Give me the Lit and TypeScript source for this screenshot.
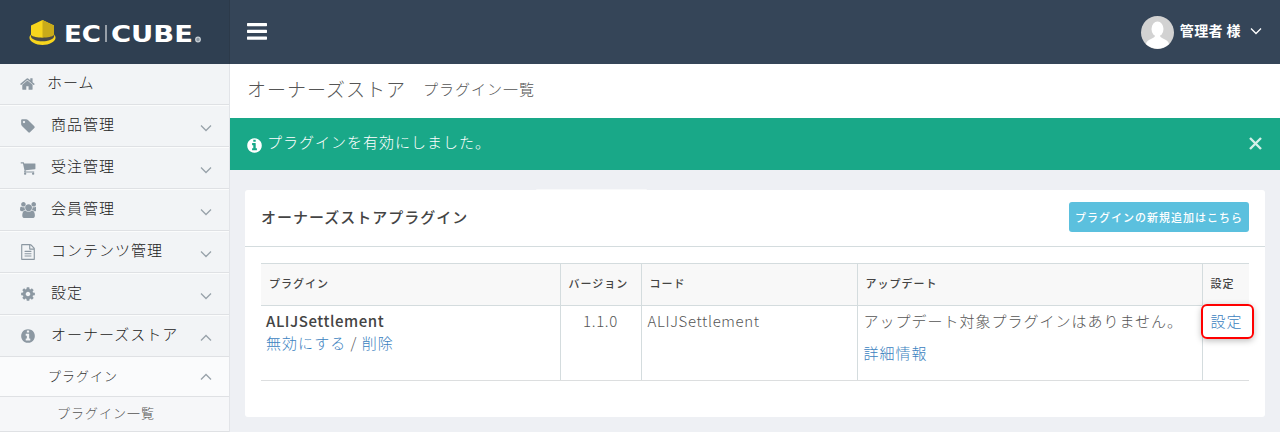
import { LitElement, html, css, svg } from "lit";
import { customElement } from "lit/decorators.js";

const P: Record<string, string> = {
  home: "M1408 992v480q0 26-19 45t-45 19h-384v-384h-256v384h-384q-26 0-45-19t-19-45v-480q0-1 .5-3t.5-3l575-474 575 474q1 2 1 6zm223-69l-62 74q-8 9-21 11h-3q-13 0-21-7l-692-577-692 577q-12 8-24 7-13-2-21-11l-62-74q-8-10-7-23.500t11-21.500l719-599q32-26 76-26t76 26l244 204v-195q0-14 9-23t23-9h192q14 0 23 9t9 23v408l219 182q10 8 11 21.500t-7 23.500z",
  tag: "M576 448q0-53-37.500-90.500t-90.500-37.500-90.500 37.500-37.500 90.500 37.500 90.500 90.500 37.500 90.500-37.500 37.500-90.500zm1067 576q0 53-37 90l-491 492q-39 37-91 37-53 0-90-37l-715-716q-38-37-64.500-101t-26.500-117v-416q0-52 38-90t90-38h416q53 0 117 26.500t102 64.500l715 714q37 39 37 91z",
  cart: "M704 1536q0 52-38 90t-90 38-90-38-38-90 38-90 90-38 90 38 38 90zm896 0q0 52-38 90t-90 38-90-38-38-90 38-90 90-38 90 38 38 90zm128-1088v512q0 24-16.500 42.500t-40.500 21.500l-1044 122q13 60 13 70 0 16-24 64h920q26 0 45 19t19 45-19 45-45 19h-1024q-26 0-45-19t-19-45q0-11 8-31.500t16-36 21.500-40 15.500-29.500l-177-823h-204q-26 0-45-19t-19-45 19-45 45-19h256q16 0 28.500 6.500t19.500 15.500 13 24.500 8 26 5.500 29.500 4.500 26h1201q26 0 45 19t19 45z",
  users: "M593 896q-162 5-265 128h-134q-82 0-138-40.500t-56-118.500q0-353 124-353 6 0 43.500 21t97.500 42.500 119 21.500q67 0 133-23-5 37-5 66 0 139 81 256zm1071 637q0 120-73 189.500t-194 69.500h-874q-121 0-194-69.500t-73-189.500q0-53 3.500-103.500t14-109 26.500-108.500 43-97.500 62-81 85.500-53.500 111.500-20q10 0 43 21.500t73 48 107 48 135 21.500 135-21.500 107-48 73-48 43-21.500q61 0 111.500 20t85.500 53.500 62 81 43 97.500 26.500 108.500 14 109 3.500 103.500zm-1024-1277q0 106-75 181t-181 75-181-75-75-181 75-181 181-75 181 75 75 181zm704 384q0 159-112.500 271.500t-271.500 112.500-271.500-112.500-112.500-271.500 112.500-271.500 271.500-112.500 271.500 112.500 112.500 271.500zm576 225q0 78-56 118.500t-138 40.500h-134q-103-123-265-128 81-117 81-256 0-29-5-66 66 23 133 23 59 0 119-21.500t97.500-42.500 43.500-21q124 0 124 353zm-128-609q0 106-75 181t-181 75-181-75-75-181 75-181 181-75 181 75 75 181z",
  file: "M1596 380q28 28 48 76t20 88v1152q0 40-28 68t-68 28h-1344q-40 0-68-28t-28-68v-1600q0-40 28-68t68-28h896q40 0 88 20t76 48zm-444-244v376h376q-10-29-22-41l-313-313q-12-12-41-22zm384 1528v-1024h-416q-40 0-68-28t-28-68v-416h-768v1536h1280zm-1024-864q0-14 9-23t23-9h704q14 0 23 9t9 23v64q0 14-9 23t-23 9h-704q-14 0-23-9t-9-23v-64zm736 224q14 0 23 9t9 23v64q0 14-9 23t-23 9h-704q-14 0-23-9t-9-23v-64q0-14 9-23t23-9h704zm0 256q14 0 23 9t9 23v64q0 14-9 23t-23 9h-704q-14 0-23-9t-9-23v-64q0-14 9-23t23-9h704z",
  cog: "M1152 896q0-106-75-181t-181-75-181 75-75 181 75 181 181 75 181-75 75-181zm512-109v222q0 12-8 23t-20 13l-185 28q-19 54-39 91 35 50 107 138 10 12 10 25t-9 23q-27 37-99 108t-94 71q-12 0-26-9l-138-108q-44 23-91 38-16 136-29 186-7 28-36 28h-222q-14 0-24.500-8.500t-11.500-21.500l-28-184q-49-16-90-37l-141 107q-10 9-25 9-14 0-25-11-126-114-165-168-7-10-7-23 0-12 8-23 15-21 51-66.500t54-70.500q-27-50-41-99l-183-27q-13-2-21-12.500t-8-23.500v-222q0-12 8-23t19-13l186-28q14-46 39-92-40-57-107-138-10-12-10-24 0-10 9-23 26-36 98.500-107.500t94.500-71.500q13 0 26 10l138 107q44-23 91-38 16-136 29-186 7-28 36-28h222q14 0 24.500 8.500t11.500 21.500l28 184q49 16 90 37l142-107q9-9 24-9 13 0 25 10 129 119 165 170 7 8 7 22 0 12-8 23-15 21-51 66.500t-54 70.500q26 50 41 98l183 28q13 2 21 12.500t8 23.500z",
  info: "M1152 1376v-160q0-14-9-23t-23-9h-96v-512q0-14-9-23t-23-9h-320q-14 0-23 9t-9 23v160q0 14 9 23t23 9h96v320h-96q-14 0-23 9t-9 23v160q0 14 9 23t23 9h448q14 0 23-9t9-23zm-128-896v-160q0-14-9-23t-23-9h-192q-14 0-23 9t-9 23v160q0 14 9 23t23 9h192q14 0 23-9t9-23zm640 416q0 209-103 385.500t-279.500 279.500-385.500 103-385.500-103-279.500-279.500-103-385.500 103-385.500 279.500-279.500 385.500-103 385.500 103 279.500 279.500 103 385.500z",
};

const fa = (name: string, cls = "ico") =>
  html`<svg class=${cls} viewBox="0 0 1792 1792" fill="currentColor"><path d=${P[name]}></path></svg>`;

const chev = (up = false) =>
  html`<svg class="chev" viewBox="0 0 12 8" fill="none" stroke="currentColor" stroke-width="1.300">
    ${up ? svg`<path d="M1 6.500 6 1.500l5 5"></path>` : svg`<path d="M1 1.500l5 5 5-5"></path>`}
  </svg>`;

const NAV: [string, string, boolean?][] = [
  ["tag", "商品管理"],
  ["cart", "受注管理"],
  ["users", "会員管理"],
  ["file", "コンテンツ管理"],
  ["cog", "設定"],
  ["info", "オーナーズストア", true],
];

@customElement("app-root")
export class AppRoot extends LitElement {
  static styles = css`
    :host {
      display: block;
      width: 1280px;
      height: 432px;
      overflow: hidden;
      font-family: "Noto Sans CJK JP", "Noto Sans", sans-serif;
      font-size: 15px;
      font-weight: 300;
      letter-spacing: 1px;
      color: #333;
      background: #eef0f4;
    }
    a { color: #3b82c0; text-decoration: none; }
    .top { display: flex; height: 64px; background: #354558; color: #fff; }
    .brand {
      width: 229px; flex: none; display: flex; align-items: center;
      background: #2f3f51; border-right: 1px solid #2c3a4a;
    }
    .logo { display: block; margin-left: 27px; }
    .logo-word { font-family: "DejaVu Sans", sans-serif; font-weight: 700; fill: #fff; letter-spacing: 0; }
    .burger { width: 20px; height: 18px; margin: 23px 0 0 17px; }
    .user { margin-left: auto; display: flex; align-items: center; padding-right: 18px; }
    .avatar { width: 33px; height: 33px; display: block; margin-right: 6px; }
    .uname { font-size: 14px; font-weight: 700; letter-spacing: 0.4px; margin: 0 9px 5px 0; white-space: pre; }
    .user .chev { width: 12px; height: 8px; color: #fff; margin-bottom: 2px; }

    .body { display: flex; height: 368px; }
    .side { width: 229px; flex: none; background: #f2f4f6; border-right: 1px solid #e2e4e8; }
    .item {
      display: flex; align-items: center; height: 42px; box-sizing: border-box;
      border-bottom: 1px solid #dfe1e4; border-top: 1px solid #fbfcfc; color: #222;
    }
    .item.home { height: 41px; border-top: 0; }
    .ico { width: 16px; height: 16px; color: #8c98a2; margin-left: 20px; flex: none; }
    .item .label { margin: 0 0 5px 15px; }
    .item.home .label { margin-left: 11px; }
    .chev { width: 12px; height: 8px; color: #98a2aa; flex: none; }
    .item .chev { margin: 3px 17px 0 auto; }
    .sub {
      height: 40px; background: #fafbfc; display: flex; align-items: center; border-bottom: 1px solid #dfe1e4;
      font-size: 13px; color: #333; box-sizing: border-box; padding-left: 48px;
    }
    .sub span { margin-bottom: 2px; }
    .sub .chev { margin: 0 17px 0 auto; }
    .subsub {
      height: 35px; background: #f6f7f9; border-bottom: 1px solid #dfe1e4; font-size: 13px; color: #555;
      padding: 6px 0 0 57px; box-sizing: border-box; line-height: 20px;
    }

    .main { flex: 1; min-width: 0; }
    .title {
      height: 54px; box-sizing: border-box; background: #fff; display: flex; align-items: center;
      padding: 0 0 5px 17px; color: #555; white-space: pre;
    }
    .title .h1 { font-size: 19px; }
    .title .h2 { font-size: 15px; margin-left: 17px; }
    .alert {
      height: 52px; background: #19a888; color: #fff; display: flex; align-items: center;
      padding: 0 17px; font-size: 15px;
    }
    .alert .msg { margin-bottom: 6px; }
    .alert .ico-i { width: 17px; height: 17px; margin: 2px 4px 0 -1px; flex: none; }
    .alert .x { margin-left: auto; display: block; width: 13px; height: 13px; margin-right: 1px; margin-bottom: 2px; }
    .content { padding: 20px 15px 0; }
    .card { position: relative; background: #fff; border-radius: 3px; height: 227px; }
    .card::before {
      content: ""; position: absolute; left: 291px; top: -1px; width: 111px; height: 1px;
      background: #f8f9fa; border-radius: 2px 2px 0 0;
    }
    .card-h {
      height: 57px; box-sizing: border-box; display: flex; align-items: center; justify-content: space-between;
      padding: 0 16px 2px; border-bottom: 1px solid #d4dcde;
    }
    .card-h h3 { margin: 0 0 2px; font-size: 15px; font-weight: 500; color: #444; }
    .btn {
      background: #5bc0de; color: #fff; border-radius: 3px; font-size: 11px; font-weight: 500;
      height: 30px; width: 180px; display: flex; align-items: center; justify-content: center;
    }
    .card-b { padding: 16px 16px 0; position: relative; }
    table { border-collapse: collapse; table-layout: fixed; width: 988px; }
    th {
      background: #f8f8f8; height: 42px; box-sizing: border-box; padding: 0 0 4px 8px; text-align: left;
      font-size: 11px; font-weight: 500; color: #444;
      border-top: 1px solid #d4dcde; border-bottom: 1px solid #d4dcde; border-left: 1px solid #d4dcde;
    }
    td {
      height: 75px; vertical-align: top; padding: 4px 0 0 6px; color: #555; line-height: 21px;
      border-bottom: 1px solid #dcdedf; border-left: 1px solid #d4dcde; box-sizing: border-box;
    }
    th:first-child, td:first-child { border-left: 0; }
    td:first-child { padding-left: 5px; }
    td:last-child { padding-left: 8px; }
    .pname { font-weight: 500; color: #444; font-size: 15px; letter-spacing: 0.55px; margin-bottom: 1px; }
    .ctr { text-align: center; padding-left: 0; }
    .code { letter-spacing: 0.65px; }
    .upd .more { display: block; margin-top: 11px; }
    .mark {
      position: absolute; left: 956px; top: 57px; width: 53px; height: 35px; box-sizing: border-box;
      border: 2px solid #f00; border-radius: 6px; box-shadow: 0 2px 6px rgba(0,0,0,.25); pointer-events: none;
    }
  `;

  render() {
    return html`
      <div class="top">
        <div class="brand">
          <svg class="logo" width="176" height="34" viewBox="0 0 176 34">
            <path d="M4 10.500 15.500 5 27 10.500V22c0 5-23 5-23 0z" fill="#f7d51d"></path>
            <path d="M15.500 5 27 10.500V22c0 2.500-6 3.700-11.500 3.700z" fill="#c9ab1a"></path>
            <path d="M4 20c3 3.500 20 3.500 23 0v3.500c-3 3.500-20 3.500-23 0z" fill="#4a4a48"></path>
            <path d="M4 19.500c-5 5 3 10.500 11.500 10.500S32 24.500 27 19.500c3 9-26 9-23 0z" fill="#f7d51d"></path>
            <text class="logo-word" x="37" y="27" font-size="23" textLength="37" lengthAdjust="spacingAndGlyphs">EC</text>
            <rect x="78.500" y="10" width="1" height="17" fill="#fff"></rect>
            <text class="logo-word" x="84" y="27" font-size="23" textLength="82" lengthAdjust="spacingAndGlyphs">CUBE</text>
            <circle cx="171" cy="24.500" r="2.300" fill="#8b97a2" stroke="#c9d0d6" stroke-width="1.200"></circle>
          </svg>
        </div>
        <svg class="burger" viewBox="0 0 20 18" fill="#fff">
          <rect y="0" width="20" height="3.200" rx=".6"></rect>
          <rect y="6.700" width="20" height="3.200" rx=".6"></rect>
          <rect y="13.500" width="20" height="3.200" rx=".6"></rect>
        </svg>
        <div class="user">
          <svg class="avatar" viewBox="0 0 33 33">
            <circle cx="16.500" cy="16.500" r="16.500" fill="#d2d2d2"></circle>
            <ellipse cx="16.500" cy="13" rx="6" ry="7.500" fill="#fff"></ellipse>
            <path d="M5 28c1-5 8-5 9-8h5c1 3 8 3 9 8a16.500 16.500 0 0 1-23 0z" fill="#fff"></path>
          </svg>
          <span class="uname">管理者 様</span>
          ${chev()}
        </div>
      </div>
      <div class="body">
        <nav class="side">
          <div class="item home">${fa("home")}<span class="label">ホーム</span></div>
          ${NAV.map(
            ([i, t, up]) => html`<div class="item">${fa(i)}<span class="label">${t}</span>${chev(!!up)}</div>`
          )}
          <div class="sub"><span>プラグイン</span>${chev(true)}</div>
          <div class="subsub">プラグイン一覧</div>
        </nav>
        <main class="main">
          <div class="title"><span class="h1">オーナーズストア</span><span class="h2">プラグイン一覧</span></div>
          <div class="alert">
            <svg class="ico-i" viewBox="0 0 1792 1792" fill="#fff"><path d=${P.info}></path></svg>
            <span class="msg">プラグインを有効にしました。</span>
            <svg class="x" viewBox="0 0 13 13" stroke="#d5efe8" stroke-width="2.400" fill="none"><path d="M1 1l11 11M12 1 1 12"></path></svg>
          </div>
          <div class="content">
            <section class="card">
              <div class="card-h">
                <h3>オーナーズストアプラグイン</h3>
                <a class="btn">プラグインの新規追加はこちら</a>
              </div>
              <div class="card-b">
                <table>
                  <colgroup>
                    <col style="width:299px" /><col style="width:81px" /><col style="width:216px" /><col style="width:345px" /><col style="width:47px" />
                  </colgroup>
                  <thead>
                    <tr><th>プラグイン</th><th>バージョン</th><th>コード</th><th>アップデート</th><th>設定</th></tr>
                  </thead>
                  <tbody>
                    <tr>
                      <td>
                        <div class="pname">ALIJSettlement</div>
                        <a>無効にする</a> / <a>削除</a>
                      </td>
                      <td class="ctr code">1.1.0</td>
                      <td class="code">ALIJSettlement</td>
                      <td class="upd">アップデート対象プラグインはありません。<a class="more">詳細情報</a></td>
                      <td><a>設定</a></td>
                    </tr>
                  </tbody>
                </table>
                <div class="mark"></div>
              </div>
            </section>
          </div>
        </main>
      </div>
    `;
  }
}
